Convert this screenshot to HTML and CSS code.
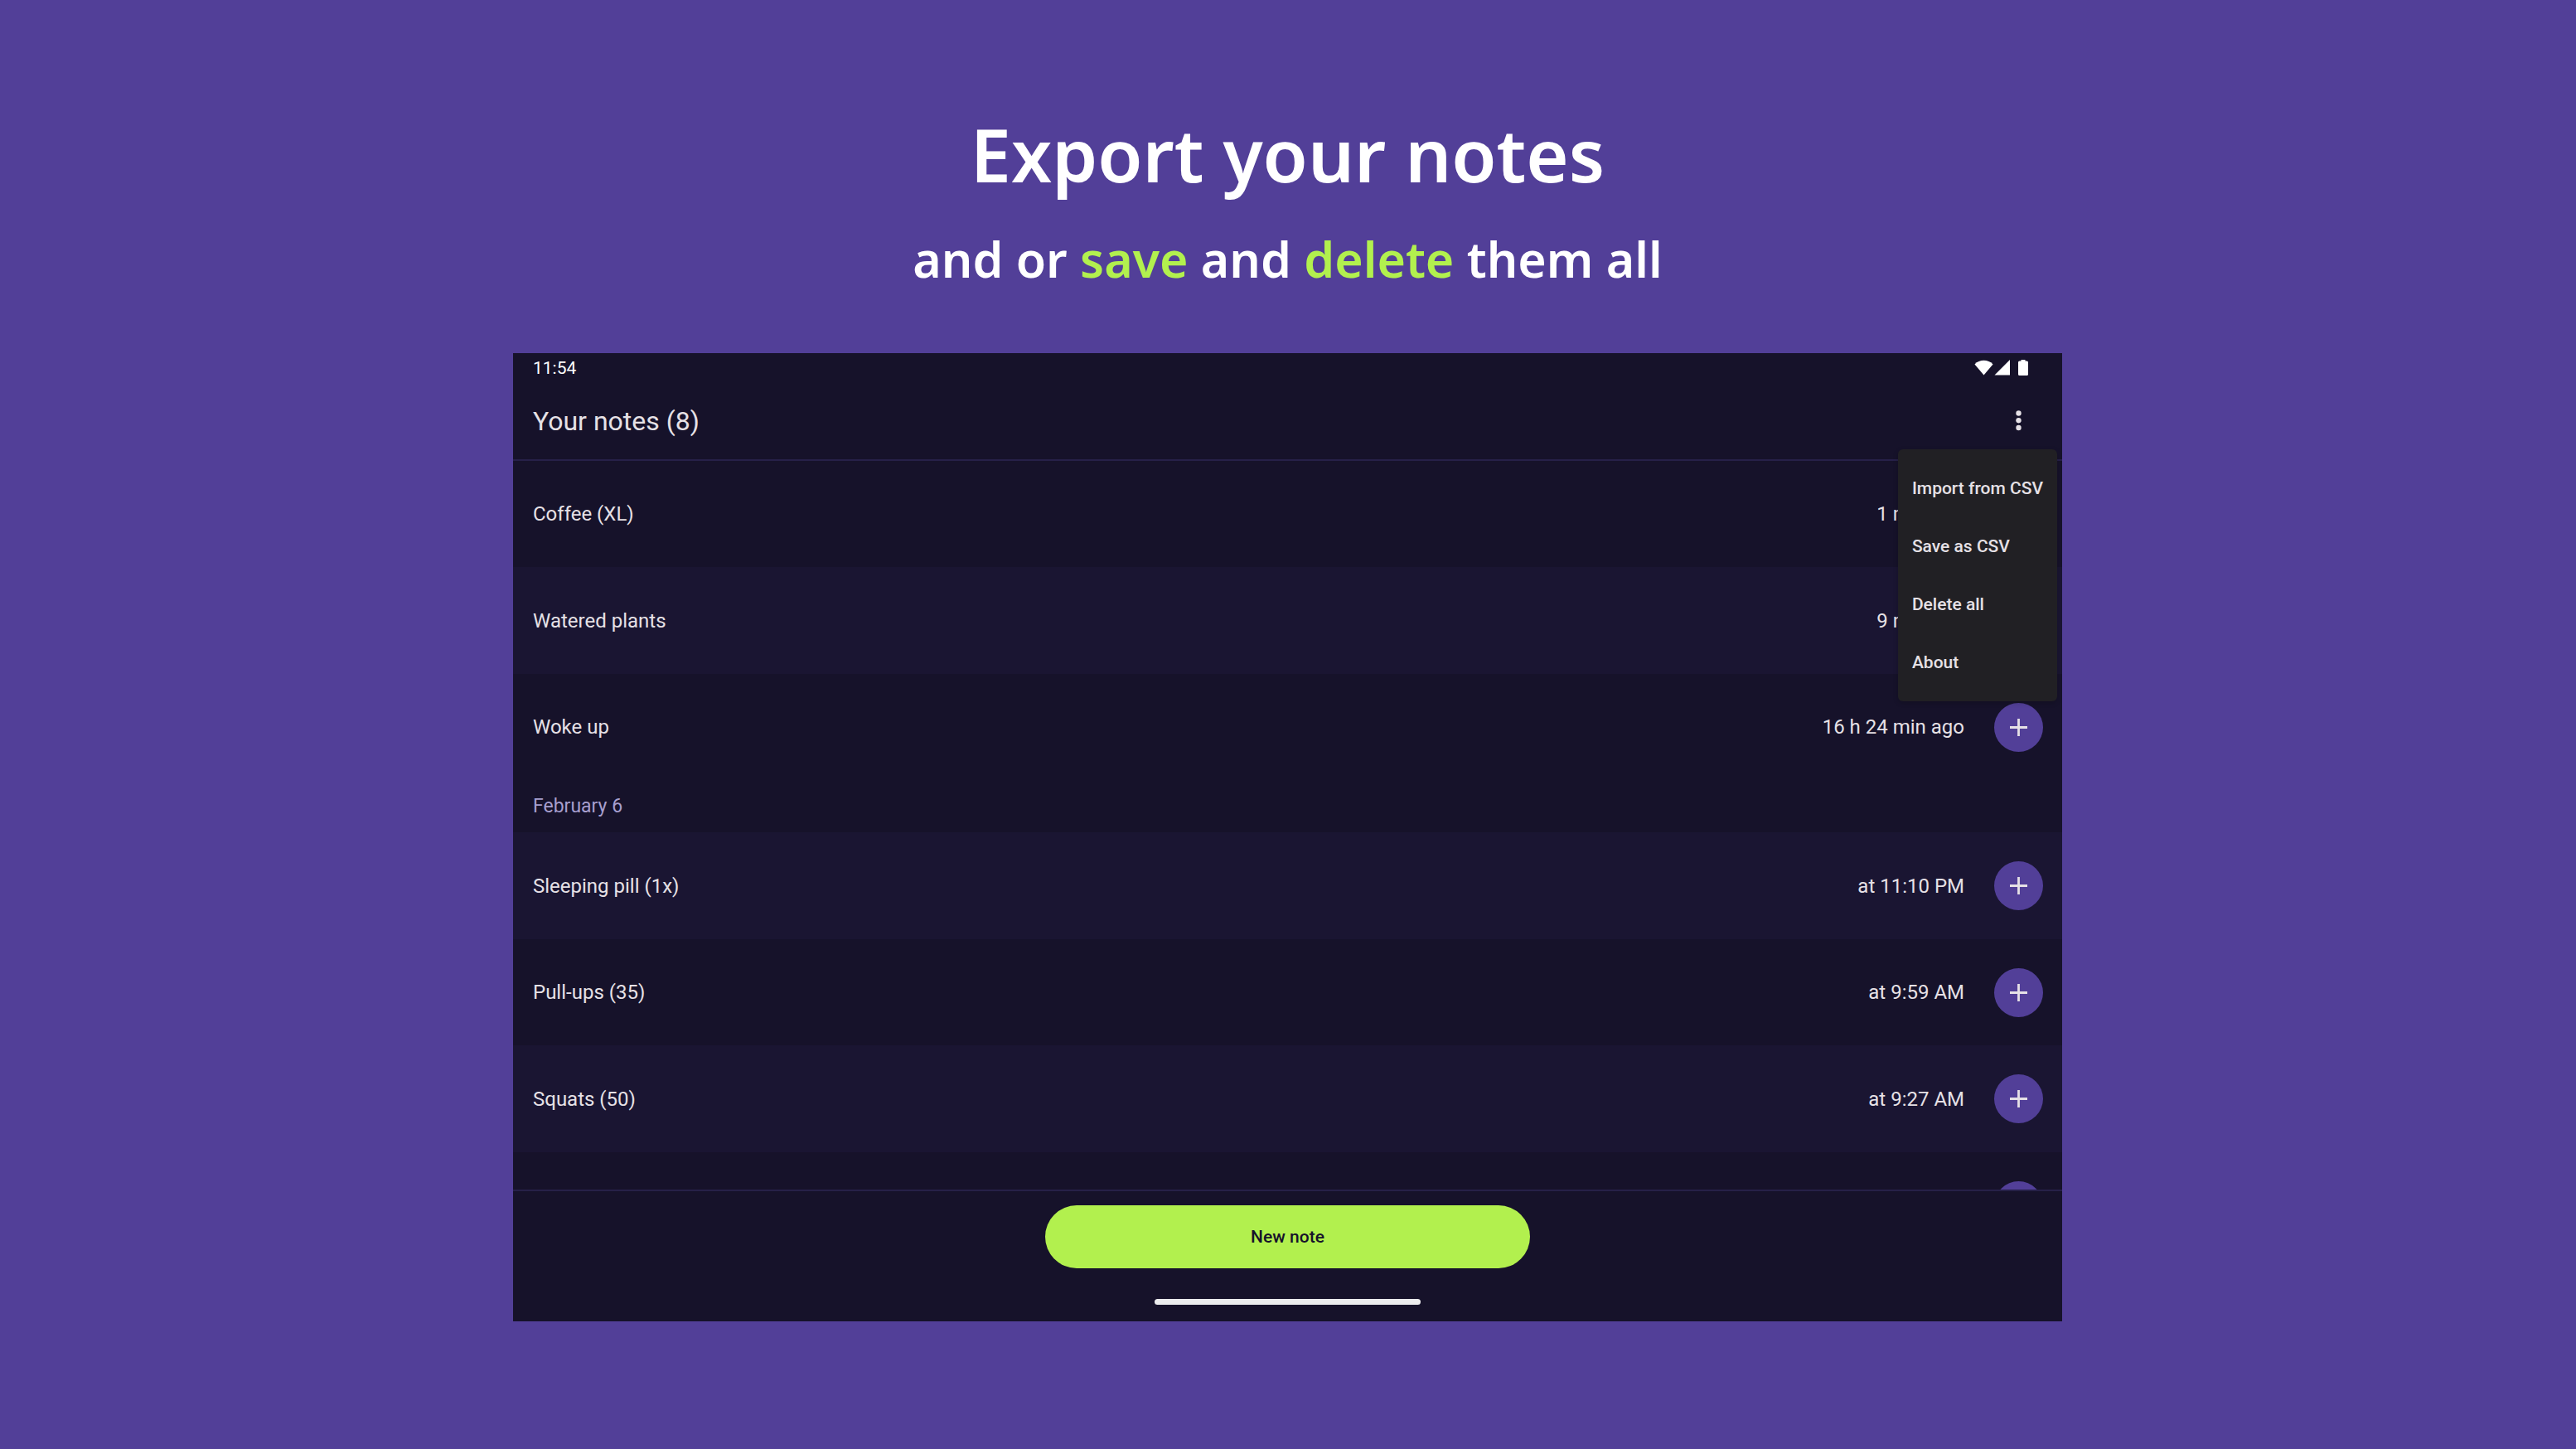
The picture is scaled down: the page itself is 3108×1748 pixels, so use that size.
FILE: index.html
```html
<!DOCTYPE html>
<html lang="en">
<head>
<meta charset="utf-8">
<title>Export your notes</title>
<link rel="stylesheet" href="styles.css">
</head>
<body>
<svg class="symbols" aria-hidden="true">
  <symbol id="plus" viewBox="0 0 21 21"><path d="M10.500 0V21M0 10.500H21" fill="none" stroke="currentColor" stroke-width="2.800"/></symbol>
</svg>
<main class="page">
  <header class="hero">
    <h1 class="hero-title">Export your notes</h1>
    <p class="hero-subtitle">and or <span class="accent">save</span> and <span class="accent">delete</span> them all</p>
  </header>

  <section class="device" aria-label="Notes app">
    <div class="status-bar">
      <time class="clock">11:54</time>
      <svg class="status-icons" viewBox="0 0 66 20" aria-hidden="true">
        <path d="M0.500 5.500C6 -0.700 17 -0.700 22.500 5.500L11.500 18.500z"/>
        <path d="M24.500 18.500H43V0z"/>
        <path d="M56.500 1.500V0H61.500V1.500H63.500Q65 1.500 65 3V17.500Q65 19 63.500 19H54.500Q53 19 53 17.500V3Q53 1.500 54.500 1.500z"/>
      </svg>
    </div>

    <div class="app-bar">
      <h2 class="app-title">Your notes (8)</h2>
      <div class="menu-anchor">
        <button class="more-button" type="button" aria-label="More options" aria-expanded="true">
          <svg class="more-icon" viewBox="0 0 7 25" aria-hidden="true"><circle cx="3.500" cy="3.500" r="3.200"/><circle cx="3.500" cy="12.200" r="3.200"/><circle cx="3.500" cy="21" r="3.200"/></svg>
        </button>
        <div class="menu">
          <button class="menu-item" type="button">Import from CSV</button>
          <button class="menu-item" type="button">Save as CSV</button>
          <button class="menu-item" type="button">Delete all</button>
          <button class="menu-item" type="button">About</button>
        </div>
      </div>
    </div>

    <div class="notes">
      <ul class="note-list">
        <li class="note"><span class="note-name">Coffee (XL)</span><span class="note-time">1 min ago</span><button class="add-button" type="button" aria-label="Add Coffee"><svg class="add-icon"><use href="#plus"/></svg></button></li>
        <li class="note note-alt"><span class="note-name">Watered plants</span><span class="note-time">9 min ago</span><button class="add-button" type="button" aria-label="Add Watered plants"><svg class="add-icon"><use href="#plus"/></svg></button></li>
        <li class="note"><span class="note-name">Woke up</span><span class="note-time">16 h 24 min ago</span><button class="add-button" type="button" aria-label="Add Woke up"><svg class="add-icon"><use href="#plus"/></svg></button></li>
      </ul>
      <h3 class="date">February 6</h3>
      <ul class="note-list">
        <li class="note note-alt"><span class="note-name">Sleeping pill (1x)</span><span class="note-time">at 11:10 PM</span><button class="add-button" type="button" aria-label="Add Sleeping pill"><svg class="add-icon"><use href="#plus"/></svg></button></li>
        <li class="note"><span class="note-name">Pull-ups (35)</span><span class="note-time">at 9:59 AM</span><button class="add-button" type="button" aria-label="Add Pull-ups"><svg class="add-icon"><use href="#plus"/></svg></button></li>
        <li class="note note-alt"><span class="note-name">Squats (50)</span><span class="note-time">at 9:27 AM</span><button class="add-button" type="button" aria-label="Add Squats"><svg class="add-icon"><use href="#plus"/></svg></button></li>
        <li class="note"><span class="note-name"></span><button class="add-button" type="button" aria-label="Add note"><svg class="add-icon"><use href="#plus"/></svg></button></li>
      </ul>
    </div>

    <footer class="bottom-bar">
      <button class="new-note" type="button">New note</button>
      <div class="home-handle"></div>
    </footer>
  </section>
</main>
</body>
</html>
```
FILE: styles.css
```css
:root {
  --purple: #523f98;
  --green: #b2f04e;
  --surface: #16122a;
  --surface-alt: #1a1532;
  --divider: #262048;
  --menu: #212024;
  --text: #e6e1e6;
  --muted: #a79fcf;
}

* {
  box-sizing: border-box;
}

body {
  margin: 0;
  background: var(--purple);
  color: var(--text);
  font-family: Roboto, "Liberation Sans", sans-serif;
}

button {
  border: 0;
  padding: 0;
  color: inherit;
  font-family: inherit;
}

.symbols {
  display: none;
}

.page {
  display: flex;
  flex-direction: column;
  height: 100vh;
  padding: 122px 620px 154px 619px;
}

.hero {
  color: #fff;
  font-family: "Noto Sans", sans-serif;
  font-weight: 600;
  text-align: center;
  padding-bottom: 70px;
}

.hero-title {
  margin: 0;
  font-size: 88px;
  line-height: 128px;
  font-weight: 600;
}

.hero-subtitle {
  margin: 18px 0 0;
  font-size: 59px;
  line-height: 88px;
}

.accent {
  color: var(--green);
}

.device {
  flex: 1;
  min-height: 0;
  display: flex;
  flex-direction: column;
  background: var(--surface);
}

.status-bar {
  display: flex;
  align-items: center;
  justify-content: space-between;
  height: 35px;
  padding: 0 40px 0 24px;
}

.clock {
  color: #fff;
  font-size: 21px;
  line-height: 24px;
}

.status-icons {
  width: 66px;
  height: 20px;
  fill: #fff;
}

.app-bar {
  display: flex;
  align-items: center;
  justify-content: space-between;
  height: 95px;
  padding: 0 23px 0 24px;
  border-bottom: 2px solid var(--divider);
}

.app-title {
  margin: 0;
  font-size: 32px;
  line-height: 40px;
  font-weight: 400;
}

.menu-anchor {
  position: relative;
}

.more-button {
  display: grid;
  place-items: center;
  width: 59px;
  height: 59px;
  background: none;
}

.more-icon {
  width: 7px;
  height: 25px;
  fill: currentColor;
}

.menu {
  position: absolute;
  top: 64px;
  right: -17px;
  display: flex;
  flex-direction: column;
  padding: 12px 0;
  border-radius: 6px;
  background: var(--menu);
  box-shadow: 0 2px 6px rgba(0, 0, 0, 0.2);
}

.menu-item {
  height: 70px;
  padding: 0 17px;
  background: none;
  font-size: 21px;
  font-weight: 500;
  text-align: left;
  white-space: nowrap;
}

.notes {
  flex: 1;
  min-height: 0;
  overflow: hidden;
}

.note-list {
  margin: 0;
  padding: 0;
  list-style: none;
}

.note {
  display: flex;
  align-items: center;
  height: 128px;
  padding: 0 23px 0 24px;
  font-size: 24px;
  line-height: 32px;
}

.note-alt {
  height: 129px;
  background: var(--surface-alt);
}

.note-name {
  flex: 1;
}

.add-button {
  display: grid;
  place-items: center;
  width: 59px;
  height: 59px;
  margin-left: 36px;
  border-radius: 50%;
  background: var(--purple);
}

.add-icon {
  width: 21px;
  height: 21px;
}

.date {
  height: 63px;
  margin: 0;
  padding: 16px 24px;
  color: var(--muted);
  font-size: 23px;
  line-height: 32px;
  font-weight: 400;
}

.bottom-bar {
  display: flex;
  flex-direction: column;
  align-items: center;
  gap: 37px;
  padding: 17px 24px 20px;
  border-top: 2px solid var(--divider);
}

.new-note {
  width: 585px;
  height: 76px;
  border-radius: 38px;
  background: var(--green);
  color: var(--surface);
  font-size: 21px;
  font-weight: 500;
}

.home-handle {
  width: 321px;
  height: 7px;
  border-radius: 4px;
  background: #ececee;
}
```
